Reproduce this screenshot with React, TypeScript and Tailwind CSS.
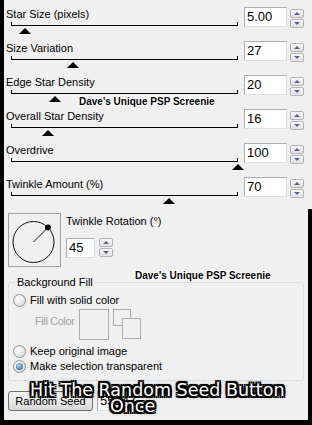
import React from "react";

const rows = [
  { label: "Star Size (pixels)", value: "5.00", thumb: 25 },
  { label: "Size Variation", value: "27", thumb: 72.5 },
  { label: "Edge Star Density", value: "20", thumb: 54.5 },
  { label: "Overall Star Density", value: "16", thumb: 48 },
  { label: "Overdrive", value: "100", thumb: 237.5 },
  { label: "Twinkle Amount (%)", value: "70", thumb: 169 },
];

function SpinButtons() {
  return (
    <div className="flex flex-col gap-[1px]">
      <div className="w-[14px] h-[9px] border border-[#b3b3b3] rounded-[2px] bg-gradient-to-b from-[#f7f7f7] to-[#e2e2e2] flex items-center justify-center">
        <div className="w-0 h-0 border-l-[3px] border-r-[3px] border-b-[3px] border-l-transparent border-r-transparent border-b-[#4f6286]" />
      </div>
      <div className="w-[14px] h-[9px] border border-[#b3b3b3] rounded-[2px] bg-gradient-to-b from-[#f7f7f7] to-[#e2e2e2] flex items-center justify-center">
        <div className="w-0 h-0 border-l-[3px] border-r-[3px] border-t-[3px] border-l-transparent border-r-transparent border-t-[#4f6286]" />
      </div>
    </div>
  );
}

function NumBox({ value, width }: { value: string; width: string }) {
  return (
    <div
      className={`${width} h-[20px] bg-white border border-t-[#abadb3] border-l-[#abadb3] border-r-[#dbdfe6] border-b-[#dbdfe6] pl-[2px] text-[13px] leading-[18px]`}
    >
      {value}
    </div>
  );
}

function Radio({ checked }: { checked?: boolean }) {
  return (
    <span className="w-[13px] h-[13px] rounded-full border border-[#8e8f8f] bg-[radial-gradient(circle_at_35%_35%,#ffffff,#d0d0d0)] flex items-center justify-center shrink-0">
      {checked && (
        <span className="w-[7px] h-[7px] rounded-full bg-[radial-gradient(circle_at_40%_35%,#a9d6f7,#1a5596)]" />
      )}
    </span>
  );
}

export default function App() {
  return (
    <div className="relative w-[312px] h-[425px] bg-black pl-[4px] pb-[5px] flex flex-col font-['Liberation_Sans',Arial,sans-serif] text-[11px] leading-[13px] text-black overflow-hidden">
      {/* sliders */}
      <div className="bg-[#f0f0f0] pt-[5px]">
        {rows.map((r) => (
          <div key={r.label} className="flex h-[34px]">
            <div className="relative w-[240px]">
              <div className="pl-[2px] pt-[3px]">{r.label}</div>
              <div className="ml-[7px] mt-[1px] w-[227px] h-[4px] border-x border-b border-black" />
              <div
                className="absolute top-[23px] w-0 h-0 border-l-[6px] border-r-[6px] border-b-[6px] border-l-transparent border-r-transparent border-b-black"
                style={{ left: r.thumb - 4 - 6 }}
              />
            </div>
            <div className="flex items-start pt-[2px] gap-[3px]">
              <NumBox value={r.value} width="w-[43px]" />
              <div className="pt-[2px]">
                <SpinButtons />
              </div>
            </div>
          </div>
        ))}
      </div>

      <div className="bg-[#f0f0f0] flex-1 mr-[4px] flex flex-col">
        {/* twinkle rotation */}
        <div className="flex pt-[4px] pl-[4px]">
          <div className="w-[53px] h-[54px] border border-[#a0a0a0]">
            <svg width="51" height="52" viewBox="0 0 51 52">
              <circle cx="24.5" cy="28" r="20.5" fill="none" stroke="#111" strokeWidth="1" />
              <line x1="24.5" y1="28" x2="39" y2="13.5" stroke="#111" strokeWidth="1" />
              <circle cx="39" cy="13.5" r="3" fill="#000" />
            </svg>
          </div>
          <div className="ml-[5px] pt-[2px]">
            <div>Twinkle Rotation (°)</div>
            <div className="flex items-start gap-[4px] mt-[10px]">
              <NumBox value="45" width="w-[29px]" />
              <SpinButtons />
            </div>
          </div>
        </div>

        {/* background fill group */}
        <div className="relative ml-[4px] mt-[15px] w-[296px] h-[99px] border border-[#d5dfe5] rounded-[3px] pl-[4px] pt-[11px] flex flex-col">
          <div className="absolute -top-[7px] left-[6px] px-[2px] bg-[#f0f0f0]">Background Fill</div>
          <div className="flex items-center h-[13px] gap-[4px]">
            <Radio />
            <span>Fill with solid color</span>
          </div>
          <div className="flex items-start mt-[2px] h-[31px] pl-[22px]">
            <div className="w-[44px] pt-[6px] text-[#a3a3a3] tracking-[-0.4px] whitespace-nowrap">Fill Color</div>
            <div className="w-[30px] h-[31px] border border-[#acacac]" />
            <div className="relative ml-[4px] w-[28px] h-[30px]">
              <div className="absolute left-0 top-0 w-[18px] h-[17px] border border-[#acacac]" />
              <div className="absolute left-[9px] top-[9px] w-[19px] h-[21px] border border-[#acacac] bg-[#f0f0f0]" />
            </div>
          </div>
          <div className="flex items-center h-[13px] gap-[4px] mt-[5px]">
            <Radio />
            <span>Keep original image</span>
          </div>
          <div className="flex items-center h-[13px] gap-[4px] mt-[2px]">
            <Radio checked />
            <span>Make selection transparent</span>
          </div>
        </div>

        {/* random seed */}
        <div className="flex items-start mt-[10px] pl-[4px] gap-[4px]">
          <div className="w-[85px] h-[20px] border border-[#707070] rounded-[3px] bg-gradient-to-b from-[#f2f2f2] via-[#ebebeb] to-[#d6d6d6] flex items-center justify-center">
            Random Seed
          </div>
          <NumBox value="55347" width="w-[50px]" />
        </div>
      </div>

      {/* watermark overlays */}
      <div className="absolute left-[79px] top-[97px] text-[10px] leading-[10px] font-bold text-black whitespace-nowrap [text-shadow:1px_0_0_#fff,-1px_0_0_#fff,0_1px_0_#fff,0_-1px_0_#fff,1px_1px_0_#fff,-1px_-1px_0_#fff,1px_-1px_0_#fff,-1px_1px_0_#fff]">
        Dave&apos;s Unique PSP Screenie
      </div>
      <div className="absolute left-[135px] top-[271px] text-[10px] leading-[10px] font-bold text-black whitespace-nowrap [text-shadow:1px_0_0_#fff,-1px_0_0_#fff,0_1px_0_#fff,0_-1px_0_#fff,1px_1px_0_#fff,-1px_-1px_0_#fff,1px_-1px_0_#fff,-1px_1px_0_#fff]">
        Dave&apos;s Unique PSP Screenie
      </div>

      {/* caption overlay */}
      <div className="absolute left-[0px] top-[382px] w-[312px] font-['DejaVu_Sans',sans-serif] text-[17.5px] leading-[16px] text-white whitespace-nowrap [text-shadow:-2px_-2px_0_#000,2px_-2px_0_#000,-2px_2px_0_#000,2px_2px_0_#000,0_2px_0_#000,0_-2px_0_#000,2px_0_0_#000,-2px_0_0_#000,0_0_4px_#000]">
        <div className="pl-[30px]">Hit The Random Seed Button</div>
        <div className="pl-[110px]">Once</div>
      </div>
    </div>
  );
}
